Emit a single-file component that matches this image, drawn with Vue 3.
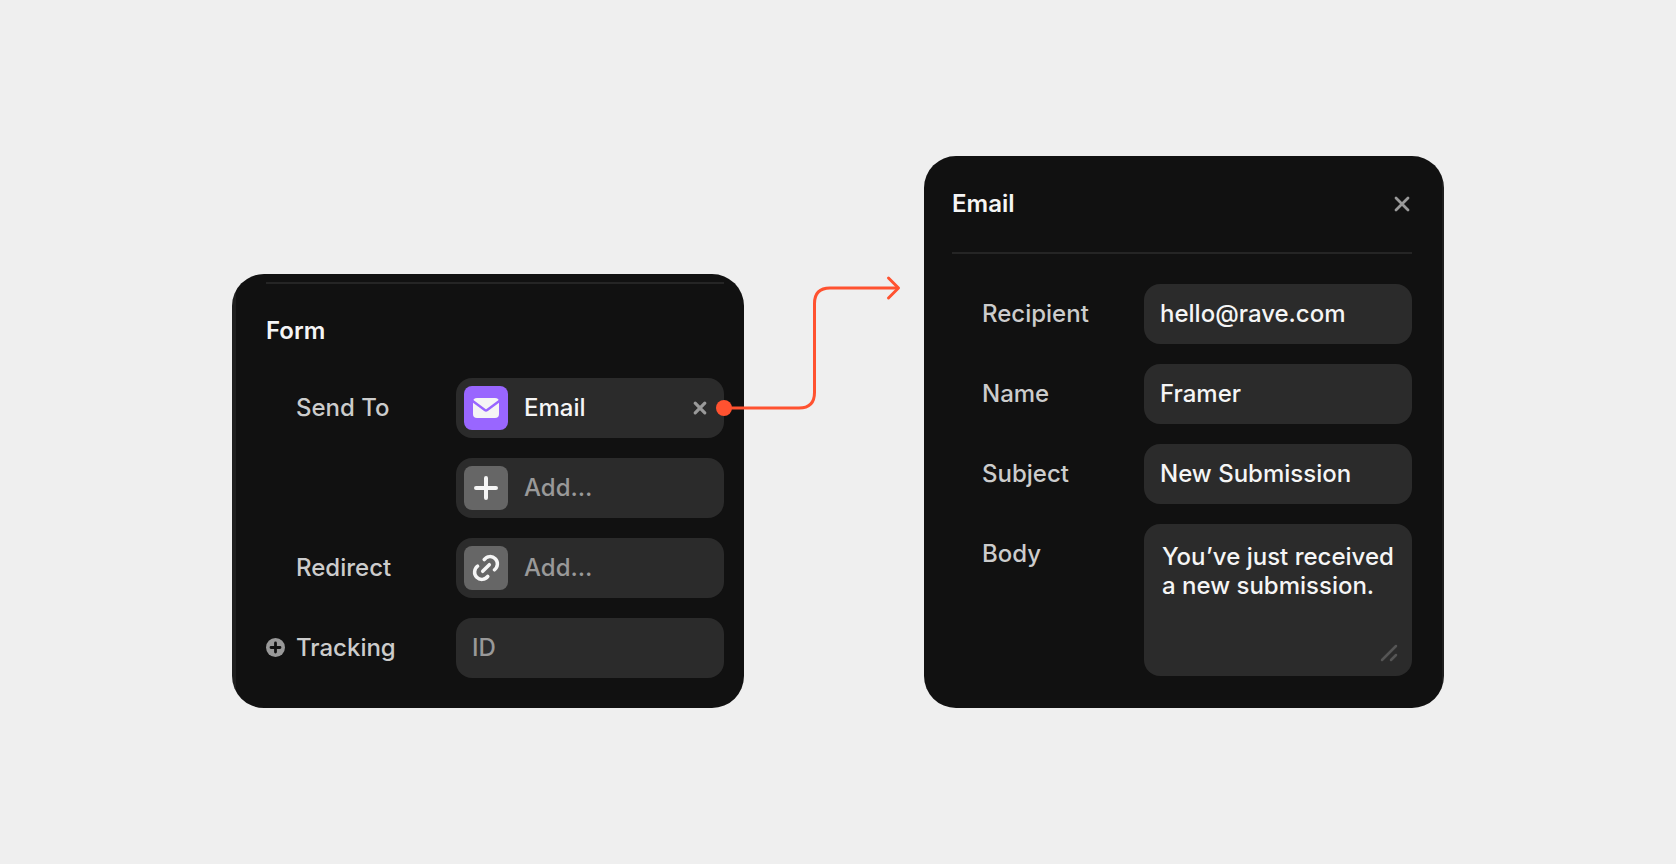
<script setup>
import { ref } from 'vue'

const recipient = ref('hello@rave.com')
const sender = ref('Framer')
const subject = ref('New Submission')
const body = ref('You’ve just received a new submission.')
const trackingId = ref('')
</script>

<template>
  <main class="stage">
    <form class="card form-card" @submit.prevent>
      <hr class="divider" />
      <header class="card-head form-head">
        <h2 class="title">Form</h2>
      </header>
      <div class="rows">
        <div class="row">
          <label class="label" for="send-to">Send To</label>
          <div class="field picker linked">
            <button id="send-to" class="pick" type="button">
              <svg class="tile mail" viewBox="0 0 44 44" aria-hidden="true">
                <rect class="ink-fill" x="9" y="12" width="26" height="20" rx="4" />
                <path class="flap" d="M8 14.500 L20.800 24 Q22 24.900 23.200 24 L36 14.500" />
              </svg>
              <span>Email</span>
            </button>
            <button class="icon-btn clear" type="button" aria-label="Remove Email">
              <svg width="20" height="20" viewBox="0 0 20 20" aria-hidden="true">
                <path class="cross bold" d="M5.2 5.2 L14.8 14.8 M14.8 5.2 L5.2 14.8" />
              </svg>
            </button>
            <svg class="connector" width="190" height="146" viewBox="0 0 190 146" aria-hidden="true">
              <path class="wire" d="M8 138 H83 Q98.500 138 98.500 122.500 V33.500 Q98.500 18 114 18 H182" />
              <path class="wire head" d="M172.500 8 L182.500 18 L172.500 28" />
              <circle class="dot" cx="8" cy="138" r="8" />
            </svg>
          </div>
        </div>
        <div class="row">
          <button class="field picker pick muted" type="button">
            <svg class="tile" viewBox="0 0 44 44" aria-hidden="true">
              <path class="plus" d="M22 12 V32 M12 22 H32" />
            </svg>
            <span>Add…</span>
          </button>
        </div>
        <div class="row">
          <label class="label" for="redirect">Redirect</label>
          <button id="redirect" class="field picker pick muted" type="button">
            <svg class="tile" viewBox="0 0 44 44" aria-hidden="true">
              <path class="chain" d="M20.200 13.600 A7.300 7.300 0 1 1 30.400 23.800 M13.600 20.200 A7.300 7.300 0 1 0 23.800 30.400 M18.700 25.300 L25.300 18.700" />
            </svg>
            <span>Add…</span>
          </button>
        </div>
        <div class="row">
          <button class="icon-btn add" type="button" aria-label="Add tracking">
            <svg width="20" height="20" viewBox="0 0 20 20" aria-hidden="true">
              <circle class="disc" cx="9.500" cy="9.500" r="9.500" />
              <path class="disc-plus" d="M9.500 5 V14 M5 9.500 H14" />
            </svg>
          </button>
          <label class="label" for="tracking">Tracking</label>
          <input id="tracking" v-model="trackingId" class="field text" type="text" placeholder="ID" />
        </div>
      </div>
    </form>

    <form class="card email-card" @submit.prevent>
      <header class="card-head email-head">
        <h2 class="title">Email</h2>
        <button class="icon-btn" type="button" aria-label="Close">
          <svg width="20" height="20" viewBox="0 0 20 20" aria-hidden="true">
            <path class="cross" d="M4 4 L16 16 M16 4 L4 16" />
          </svg>
        </button>
      </header>
      <hr class="divider" />
      <div class="rows email-rows">
        <div class="row">
          <label class="label" for="recipient">Recipient</label>
          <input id="recipient" v-model="recipient" class="field text" type="text" />
        </div>
        <div class="row">
          <label class="label" for="name">Name</label>
          <input id="name" v-model="sender" class="field text" type="text" />
        </div>
        <div class="row">
          <label class="label" for="subject">Subject</label>
          <input id="subject" v-model="subject" class="field text" type="text" />
        </div>
        <div class="row">
          <label class="label" for="body">Body</label>
          <div class="field area">
            <textarea id="body" v-model="body" class="area-text"></textarea>
            <svg class="grip" width="20" height="20" viewBox="0 0 20 20" aria-hidden="true">
              <path d="M3 17 L17 3 M12 17 L17 12" />
            </svg>
          </div>
        </div>
      </div>
    </form>
  </main>
</template>

<style>
body {
  background: #efefef;
}
</style>

<style scoped>
.stage {
  box-sizing: border-box;
  min-height: 100vh;
  display: grid;
  grid-template-columns: 512px 520px;
  justify-content: center;
  align-content: center;
  align-items: end;
  gap: 180px;
  font-family: Inter, "Liberation Sans", sans-serif;
  font-size: 24px;
  font-weight: 450;
  line-height: 30px;
  color: #f5f5f5;
}
.card {
  box-sizing: border-box;
  border-radius: 32px;
}
.form-card {
  padding: 8px 20px 30px 34px;
  background: linear-gradient(to right, #1e1e1e 4px, #111 4px);
}
.email-card {
  padding: 0 32px 32px 28px;
  background: linear-gradient(to left, #1e1e1e 2px, #111 2px);
}
.divider {
  height: 2px;
  margin: 0;
  border: 0;
  background: #252525;
}
.card-head {
  display: flex;
  align-items: center;
  justify-content: space-between;
}
.form-head {
  height: 94px;
}
.email-head {
  height: 96px;
}
.title {
  margin: 0;
  font-size: 24px;
  font-weight: 600;
  line-height: 32px;
}
.rows {
  display: grid;
  gap: 20px;
}
.email-rows {
  padding-top: 30px;
}
.row {
  display: grid;
  grid-template-columns: 30px 1fr 268px;
}
.label {
  grid-column: 2;
  grid-row: 1;
  height: 60px;
  line-height: 59px;
  color: #ccc;
}
.field {
  grid-column: 3;
  box-sizing: border-box;
  width: 100%;
  min-height: 60px;
  margin: 0;
  border: 0;
  border-radius: 16px;
  background: #2b2b2b;
  color: #f5f5f5;
  font: inherit;
}
.text {
  padding: 0 16px;
}
.text::placeholder {
  color: #999;
  opacity: 1;
}
.picker {
  display: flex;
  align-items: center;
  padding: 0 12px 0 8px;
}
.pick {
  gap: 16px;
  text-align: left;
  cursor: pointer;
}
.linked {
  position: relative;
  justify-content: space-between;
}
.linked .pick {
  display: flex;
  align-items: center;
  padding: 0;
  border: 0;
  background: none;
  color: inherit;
  font: inherit;
  font-weight: 500;
}
.muted {
  color: #999;
}
.tile {
  flex: none;
  width: 44px;
  height: 44px;
  border-radius: 8px;
  background: #666;
}
.mail {
  background: #96f;
}
.ink-fill {
  fill: #f5f5f5;
}
.flap {
  fill: none;
  stroke: #96f;
  stroke-width: 2.4;
}
.plus,
.chain,
.cross,
.disc-plus,
.grip path {
  fill: none;
  stroke-linecap: round;
}
.plus {
  stroke: #f5f5f5;
  stroke-width: 4;
}
.chain {
  stroke: #f5f5f5;
  stroke-width: 3.5;
}
.cross {
  stroke: #999;
  stroke-width: 2.8;
}
.cross.bold {
  stroke-width: 3.2;
}
.disc {
  fill: #999;
}
.disc-plus {
  stroke: #111;
  stroke-width: 2.8;
}
.icon-btn {
  display: flex;
  padding: 0;
  border: 0;
  background: none;
  cursor: pointer;
}
.clear {
  margin-right: 2px;
}
.add {
  grid-column: 1;
  grid-row: 1;
  align-self: center;
}
.connector {
  position: absolute;
  right: -182px;
  bottom: 22px;
  pointer-events: none;
}
.wire {
  fill: none;
  stroke: #ff5230;
  stroke-width: 3;
}
.head {
  stroke-linecap: round;
  stroke-linejoin: round;
}
.dot {
  fill: #ff5230;
}
.area {
  position: relative;
  height: 152px;
}
.area-text {
  box-sizing: border-box;
  display: block;
  width: 100%;
  height: 100%;
  padding: 18px 12px 18px 18px;
  border: 0;
  background: none;
  color: inherit;
  font: inherit;
  line-height: 29px;
  resize: none;
  overflow: hidden;
}
.grip {
  position: absolute;
  right: 13px;
  bottom: 13px;
  pointer-events: none;
}
.grip path {
  stroke: #555;
  stroke-width: 2.5;
}
</style>
